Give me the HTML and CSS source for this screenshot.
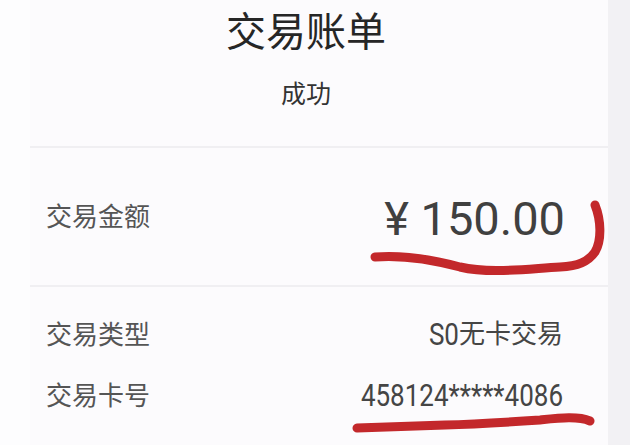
FILE: index.html
```html
<!DOCTYPE html>
<html lang="zh-CN">
<head>
    <meta charset="UTF-8">
    <meta name="viewport" content="width=device-width, initial-scale=1.0">
    <title>交易账单</title>
    <link rel="stylesheet" href="styles.css">
</head>
<body>
    <div class="screen">
        <div class="gutter"></div>

        <main class="bill">
            <header class="bill-head">
                <h1>交易账单</h1>
                <p class="status">成功</p>
            </header>

            <section class="amount-row">
                <span class="label">交易金额</span>
                <span class="amount">¥ 150.00</span>
            </section>

            <ul class="detail-list">
                <li>
                    <span class="label">交易类型</span>
                    <span class="value"><span class="num">S0</span>无卡交易</span>
                </li>
                <li>
                    <span class="label">交易卡号</span>
                    <span class="value"><span class="num">458124*****4086</span></span>
                </li>
            </ul>
        </main>

        <div class="edge"></div>

        <!-- red pen marks drawn over the screenshot -->
        <svg class="marks" width="630" height="445" viewBox="0 0 630 445">
            <path d="M375 257 C 400 255, 430 259, 460 267 C 490 274, 525 269, 560 267 C 578 266, 588 262, 595 252 C 602 240, 601 220, 595 205" />
            <path d="M357 428 C 390 427, 420 426, 445 425 C 480 424, 510 422, 540 420 C 560 418, 578 416, 590 421" />
        </svg>
    </div>
</body>
</html>
```

FILE: styles.css
```css
* {
    box-sizing: border-box;
    margin: 0;
    padding: 0;
}

html,
body {
    width: 630px;
    height: 445px;
    overflow: hidden;
}

body {
    font-family: "Noto Sans CJK SC", "Noto Sans", sans-serif;
    color: #444;
    background-color: #fdfdfe;
}

.screen {
    position: relative;
    display: flex;
    height: 445px;
}

.gutter {
    width: 30px;
    flex-shrink: 0;
}

.bill {
    width: 578px;
    flex-shrink: 0;
    background-color: #fcfbfd;
    padding: 0 45px 0 16px;
}

.edge {
    flex: 1;
    background-color: #f2f1f4;
}

.bill-head {
    text-align: center;
    padding: 0 26px 36px 0;
    margin: 0 -45px 0 -16px;
    border-bottom: 2px solid #f0eff2;
}

.bill-head h1 {
    font-size: 40px;
    font-weight: 400;
    line-height: 58px;
    color: #262626;
}

.status {
    margin-top: 16px;
    font-size: 25px;
    line-height: 36px;
    color: #333;
}

.label {
    font-size: 26px;
    line-height: 36px;
    color: #555;
}

.amount-row {
    display: flex;
    justify-content: space-between;
    align-items: center;
    height: 139px;
    padding-top: 4px;
    margin: 0 -45px 0 -16px;
    padding-left: 16px;
    padding-right: 43px;
    border-bottom: 2px solid #f0eff2;
}

.amount-row .label {
    margin-bottom: 7px;
}

.amount {
    font-family: Roboto, "Noto Sans", sans-serif;
    font-size: 47px;
    font-weight: 400;
    line-height: 56px;
    color: #404040;
}

.detail-list {
    list-style: none;
    padding-top: 15px;
}

.detail-list li {
    display: flex;
    justify-content: space-between;
    align-items: center;
    height: 61px;
}

.value {
    font-size: 26px;
    line-height: 36px;
    color: #454545;
}

/* digits in the photo are narrow and tall */
.num {
    display: inline-block;
    font-family: Roboto, "Noto Sans", sans-serif;
    font-size: 26px;
    transform: scaleY(1.2);
}

.marks {
    position: absolute;
    top: 0;
    left: 0;
    pointer-events: none;
}

.marks path {
    fill: none;
    stroke: #c3282b;
    stroke-width: 9;
    stroke-linecap: round;
    stroke-linejoin: round;
}
```
